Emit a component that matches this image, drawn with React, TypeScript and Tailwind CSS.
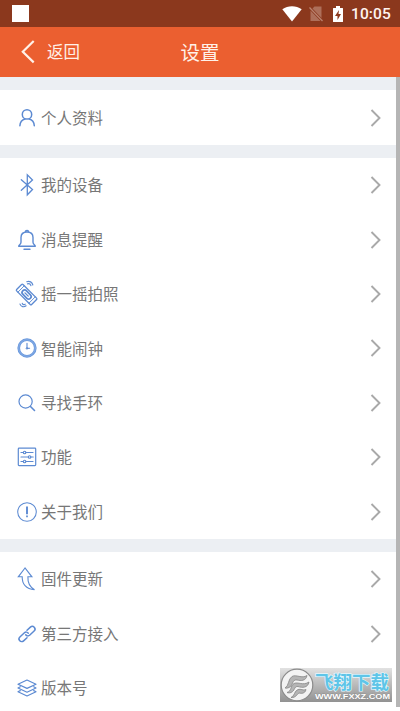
import React from "react";

const stroke = {
  fill: "none",
  stroke: "#5c8ad2",
  strokeWidth: 1.2,
  strokeLinecap: "round" as const,
  strokeLinejoin: "round" as const,
};

function Glyph({ children }: { children: React.ReactNode }) {
  return (
    <svg viewBox="0 0 20 24" className="h-6 w-5 shrink-0 overflow-visible" {...stroke}>
      {children}
    </svg>
  );
}

const icons = {
  person: (
    <Glyph>
      <circle cx="10" cy="8.400" r="4.700" strokeWidth="1.500" />
      <path d="M2.900 19.700c.2-3.500 2.300-5.900 5.200-6.700M17.300 19.700c-.2-3.500-2.300-5.900-5.200-6.700" strokeWidth="1.500" />
    </Glyph>
  ),
  bluetooth: (
    <Glyph>
      <path d="M4.300 6.800 15.500 16.500 10.300 21.800V1.800L15.500 7 4.300 17.300" strokeLinejoin="miter" strokeWidth="1.300" />
    </Glyph>
  ),
  bell: (
    <Glyph>
      <path d="M8.300 4.200C8.300 1.700 11.700 1.700 11.700 4.200M1.700 18.300h16.600c0-1.600-2.300-1.600-2.300-4V9.500c0-3.400-2.300-5.500-6-5.500S4 6.100 4 9.500v4.800c0 2.400-2.300 2.400-2.300 4ZM7 21.200h6" strokeWidth="1.400" />
    </Glyph>
  ),
  shake: (
    <Glyph>
      <g transform="rotate(45 9.600 12.500)">
        <rect x="-1" y="8" width="21.200" height="9" rx="1" strokeWidth="1.300" />
        <path d="M1.800 8v9M17.400 8v9" strokeWidth=".9" />
        <rect x="4.300" y="10" width="10.600" height="5" rx="2.400" strokeWidth="1.700" />
        <path d="M7.300 12.500h4.600" strokeWidth="1.400" />
      </g>
      <path d="M9.800-.3c2.800-1.200 5.400.6 6 3.300M10.500 1.900c1.700-.5 2.900.3 3.400 1.700M3 22.100c1 2.600 3.800 3.500 6.100 1.700M5.300 21.400c.6 1.200 1.700 1.400 2.900.8" strokeWidth="1.200" />
    </Glyph>
  ),
  clock: (
    <Glyph>
      <circle cx="10" cy="12" r="8.300" stroke="#6b9ade" strokeWidth="2.700" />
      <circle cx="10" cy="12" r="8.300" stroke="#9dbbe9" strokeWidth=".5" />
      <path d="M10 7.300v5M10 12.300h2.600" strokeWidth="1.100" />
      <circle cx="10" cy="12.400" r=".8" strokeWidth="1" />
    </Glyph>
  ),
  search: (
    <Glyph>
      <circle cx="8.600" cy="10.500" r="6.600" />
      <path d="m13.500 15.500 4 4" strokeWidth="1.600" />
    </Glyph>
  ),
  sliders: (
    <Glyph>
      <rect x="1.300" y="3.200" width="17.400" height="17.400" rx=".8" />
      <path d="M4 7.500h2.200M9 7.500h7M4 12h7.200M14 12h2.200M4 16.500h2.200M9 16.500h7" />
      <circle cx="7.600" cy="7.500" r="1.250" />
      <circle cx="12.600" cy="12" r="1.250" />
      <circle cx="7.600" cy="16.500" r="1.250" />
    </Glyph>
  ),
  about: (
    <Glyph>
      <circle cx="10" cy="12" r="9.300" strokeWidth="1.050" />
      <path d="M10 6.500v7.800" strokeWidth="1.900" strokeLinecap="butt" />
      <path d="M10 15.600v1.600" strokeWidth="1.700" strokeLinecap="butt" />
    </Glyph>
  ),
  update: (
    <Glyph>
      <path d="M8 1 1.300 9.800h3.900c-.2 7 3.700 12.500 12.300 12.900-4.500-2.500-6.900-6.800-6.600-12.900h4Z" strokeWidth="1.100" strokeLinejoin="miter" />
    </Glyph>
  ),
  link: (
    <Glyph>
      <g transform="rotate(-43 10 12)" strokeWidth="1.500">
        <path d="M7.500 14.700H2.800a2.700 2.700 0 0 1 0-5.400h6.200a2.700 2.700 0 0 1 2.500 3M12.500 9.300h4.700a2.700 2.700 0 0 1 0 5.400H11a2.700 2.700 0 0 1-2.500-3" />
      </g>
    </Glyph>
  ),
  layers: (
    <Glyph>
      <path d="m1 8.200 9-4.200 9 4.200-9 4.200ZM3.300 10.800 1 12l9 4.200 9-4.200-2.300-1.200M3.300 14.600 1 15.800 10 20l9-4.200-2.300-1.200" />
    </Glyph>
  ),
};

type Item = { label: string; icon: keyof typeof icons; last?: boolean };

const groups: Item[][] = [
  [{ label: "个人资料", icon: "person" }],
  [
    { label: "我的设备", icon: "bluetooth" },
    { label: "消息提醒", icon: "bell" },
    { label: "摇一摇拍照", icon: "shake" },
    { label: "智能闹钟", icon: "clock" },
    { label: "寻找手环", icon: "search" },
    { label: "功能", icon: "sliders" },
    { label: "关于我们", icon: "about" },
  ],
  [
    { label: "固件更新", icon: "update" },
    { label: "第三方接入", icon: "link" },
    { label: "版本号", icon: "layers", last: true },
  ],
];

function Row({ label, icon, last }: Item) {
  return (
    <div className="flex h-[54.4px] shrink-0 items-center pl-[17px] pr-[14px] pt-[0.5px]">
      {icons[icon]}
      <span className="ml-1 pb-[1.5px] text-[15.5px] leading-6 text-[#777777]">{label}</span>
      {!last && (
        <svg viewBox="0 0 12 18" className="ml-auto h-[18px] w-3" fill="none" stroke="#a9a9a9" strokeWidth="1.900">
          <path d="m1.500 1 8 8-8 8" />
        </svg>
      )}
    </div>
  );
}

function StatusBar() {
  return (
    <div className="flex h-[27px] shrink-0 items-center bg-[#8b381d] pl-3 pr-[9px]">
      <div className="h-[17px] w-[17px] bg-white" />
      <svg viewBox="0 0 20 17" className="ml-auto h-[17px] w-5" fill="#fff">
        <path d="M.3 4.200C6 .1 14 .1 19.700 4.200L10 16.400Z" />
      </svg>
      <svg viewBox="0 0 16 18" className="ml-1.5 h-[18px] w-4">
        <path d="M6.500 1.500H13.500V13L4.500 3.500ZM2.500 5.500 12.500 16H2.500Z" fill="#ad6f5a" />
        <path d="m1.500 2.500 13 13.500" stroke="#b9826f" strokeWidth="1.300" />
      </svg>
      <svg viewBox="0 0 12 18" className="ml-2 h-[18px] w-3">
        <path d="M4 1h4v2h2.500q.5 0 .5.500v13q0 .500-.500.500h-9q-.500 0-.500-.500v-13Q1 3 1.500 3H4Z" fill="#fff" />
        <path d="M7 5 3 11h2.500v4L9 9H6.500Z" fill="#8b381d" />
      </svg>
      <span className="ml-[7px] w-10 whitespace-nowrap pt-px font-[Roboto,sans-serif] text-[15.5px] font-medium leading-5 tracking-[0.1px] text-[#fff4ef]">10:05</span>
    </div>
  );
}

function Watermark() {
  return (
    <div className="absolute left-[280px] top-[668px] flex h-[34px] w-28 items-center bg-linear-to-b from-[#e2e2e2] to-[#929292]">
      <svg viewBox="0 0 34 34" className="h-[34px] w-[34px] shrink-0">
        <circle cx="17" cy="17" r="15.800" fill="#f3f3f3" stroke="#8b8b8b" strokeWidth="1.200" />
        <g fill="#b5b5b5" stroke="#858585" strokeWidth=".8" strokeLinejoin="round">
          <path d="M5 20C9 18 8 11 12 8.500 16 6 22 11 27 7.500 26 13 21 13 17 12 12 11 13 18 9 19.500 7.500 20.200 6 20.300 5 20Z" />
          <path d="M7 24.500C12 23 10 18 14 15.500 18 13.500 23 18 29 14 28 20 22 20 18 18.500 14 18 15 23 11 24.500 9.500 25 8 25 7 24.500Z" />
          <path d="M11 29.500C15 28 14 23 18 21.500 21 20.500 23 23 26 21.500 25 26 21 25.500 19 25 17 26 16 30 11 29.500Z" />
        </g>
      </svg>
      <svg viewBox="0 0 78 34" className="h-[34px] w-[78px] overflow-visible">
        <text x="1" y="20.500" textLength="74" lengthAdjust="spacingAndGlyphs" fill="#5ec5e8" stroke="#e4f7fd" strokeWidth="1.300" paintOrder="stroke" fontFamily="'Noto Sans CJK SC', sans-serif" fontWeight="700" fontSize="18.500">飞翔下载</text>
        <text x="1" y="31" textLength="75" lengthAdjust="spacingAndGlyphs" fill="#fff" stroke="#858585" strokeWidth=".6" paintOrder="stroke" fontFamily="'Liberation Sans', sans-serif" fontWeight="700" fontSize="7.500">WWW.FXXZ.COM</text>
      </svg>
    </div>
  );
}

export default function App() {
  return (
    <div className="relative flex h-[711px] w-[400px] flex-col overflow-hidden bg-white font-['Noto_Sans_CJK_SC',sans-serif]">
      <StatusBar />
      <header className="grid h-[50px] shrink-0 grid-cols-3 items-center bg-[#eb5f30] text-[#fff1e8]">
        <div className="flex items-center pl-[21px]">
          <svg viewBox="0 0 14 24" className="h-6 w-3.5" fill="none" stroke="currentColor" strokeWidth="2.200">
            <path d="M12.700 1 1.800 11.700l10.900 10.700" />
          </svg>
          <span className="ml-3 pb-0.5 text-[16.500px] leading-6">返回</span>
        </div>
        <h1 className="pb-px text-center text-[19.500px] leading-7">设置</h1>
      </header>
      <div className="flex h-[630px] shrink-0">
        <main className="flex w-[396px] flex-col overflow-hidden">
          {groups.map((items, index) => (
            <section key={index}>
              <div className="h-[13.2px] bg-[#eceff3]" />
              {items.map((item) => (
                <Row key={item.label} {...item} />
              ))}
            </section>
          ))}
        </main>
        <div className="w-1 bg-[#b5b5b5]" />
      </div>
      <Watermark />
    </div>
  );
}
